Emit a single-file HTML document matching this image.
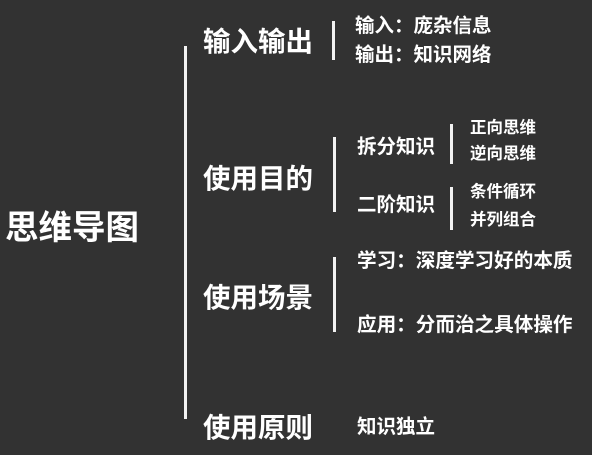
<!DOCTYPE html>
<html><head><meta charset="utf-8"><style>
html,body{margin:0;padding:0}
body{width:592px;height:455px;background:#323232;position:relative;overflow:hidden;font-family:"Liberation Sans","Noto Sans CJK SC",sans-serif;font-weight:bold;color:#fff}
.t{position:absolute;white-space:nowrap;line-height:1}
.b{position:absolute;background:#f2f2f2;width:3px}
</style></head><body>
<div class="t" style="left:5px;top:212px;font-size:33.5px">思维导图</div>
<div class="b" style="left:184px;top:46px;height:373px"></div>

<div class="t" style="left:203px;top:28px;font-size:27.5px">输入输出</div>
<div class="b" style="left:332px;top:21px;height:39px"></div>
<div class="t" style="left:355px;top:17px;font-size:19.5px">输入：庞杂信息</div>
<div class="t" style="left:355px;top:46px;font-size:19.5px">输出：知识网络</div>

<div class="t" style="left:203px;top:165px;font-size:27.5px">使用目的</div>
<div class="b" style="left:333px;top:137px;height:75px"></div>
<div class="t" style="left:357px;top:138px;font-size:19.5px">拆分知识</div>
<div class="t" style="left:357px;top:196px;font-size:19.5px">二阶知识</div>
<div class="b" style="left:450px;top:124px;height:40px"></div>
<div class="b" style="left:450px;top:187px;height:43px"></div>
<div class="t" style="left:470px;top:120px;font-size:16.5px">正向思维</div>
<div class="t" style="left:470px;top:146px;font-size:16.5px">逆向思维</div>
<div class="t" style="left:470px;top:184px;font-size:16.5px">条件循环</div>
<div class="t" style="left:470px;top:212px;font-size:16.5px">并列组合</div>

<div class="t" style="left:203px;top:284px;font-size:27.5px">使用场景</div>
<div class="b" style="left:333px;top:257px;height:75px"></div>
<div class="t" style="left:357px;top:252px;font-size:19.6px">学习：深度学习好的本质</div>
<div class="t" style="left:357px;top:316px;font-size:19.6px">应用：分而治之具体操作</div>

<div class="t" style="left:203px;top:414px;font-size:27.5px">使用原则</div>
<div class="t" style="left:357px;top:418px;font-size:19.5px">知识独立</div>
</body></html>
